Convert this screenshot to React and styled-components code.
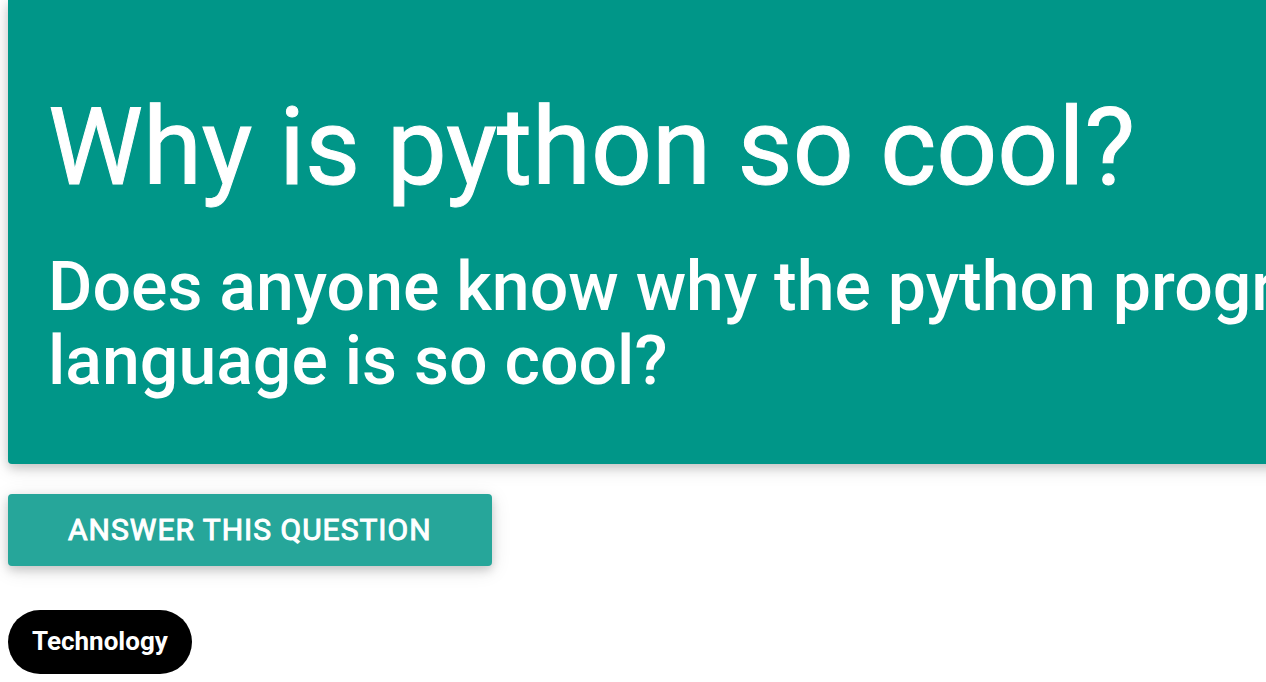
import React from "react";
import styled, { createGlobalStyle } from "styled-components";

const raised = "0 4px 10px rgba(0, 0, 0, 0.16), 0 4px 20px rgba(0, 0, 0, 0.12)";

const GlobalStyle = createGlobalStyle`
  * { box-sizing: border-box; }
  body {
    margin: 0;
    background: #fff;
    font-family: Roboto, sans-serif;
    overflow: hidden;
  }
`;

const Page = styled.main`
  padding-left: 8px;
  overflow: hidden;
`;

const Panel = styled.section`
  margin-right: -320px;
  padding: 86px 40px 66px;
  border-radius: 0 0 4px 4px;
  background: #009688;
  color: #fff;
  box-shadow: ${raised};
`;

const Title = styled.h1`
  margin: 0;
  font-size: 107px;
  line-height: 124px;
  font-weight: 400;
  -webkit-text-stroke: 1px currentColor;
`;

const Details = styled.p`
  margin: 40px 0 0;
  font-size: 68px;
  line-height: 74px;
  font-weight: 500;
`;

const AnswerButton = styled.button`
  display: block;
  margin: 30px 0 44px;
  padding: 0 60px;
  height: 72px;
  border: 0;
  border-radius: 4px;
  background: #26a69a;
  color: #fff;
  font: 400 30px/70px Roboto, sans-serif;
  letter-spacing: 1px;
  text-transform: uppercase;
  -webkit-text-stroke: 1px currentColor;
  cursor: pointer;
  box-shadow: ${raised};
`;

const Chip = styled.span`
  display: inline-block;
  margin-bottom: 8px;
  padding: 0 24px 2px;
  border-radius: 32px;
  background: #000;
  color: #fff;
  font-size: 26px;
  line-height: 62px;
  font-weight: 700;
  vertical-align: top;
`;

export default function App() {
  return (
    <>
      <GlobalStyle />
      <Page>
        <Panel>
          <Title>Why is python so cool?</Title>
          <Details>Does anyone know why the python programming language is so cool?</Details>
        </Panel>
        <AnswerButton type="button">Answer this question</AnswerButton>
        <Chip>Technology</Chip>
      </Page>
    </>
  );
}
